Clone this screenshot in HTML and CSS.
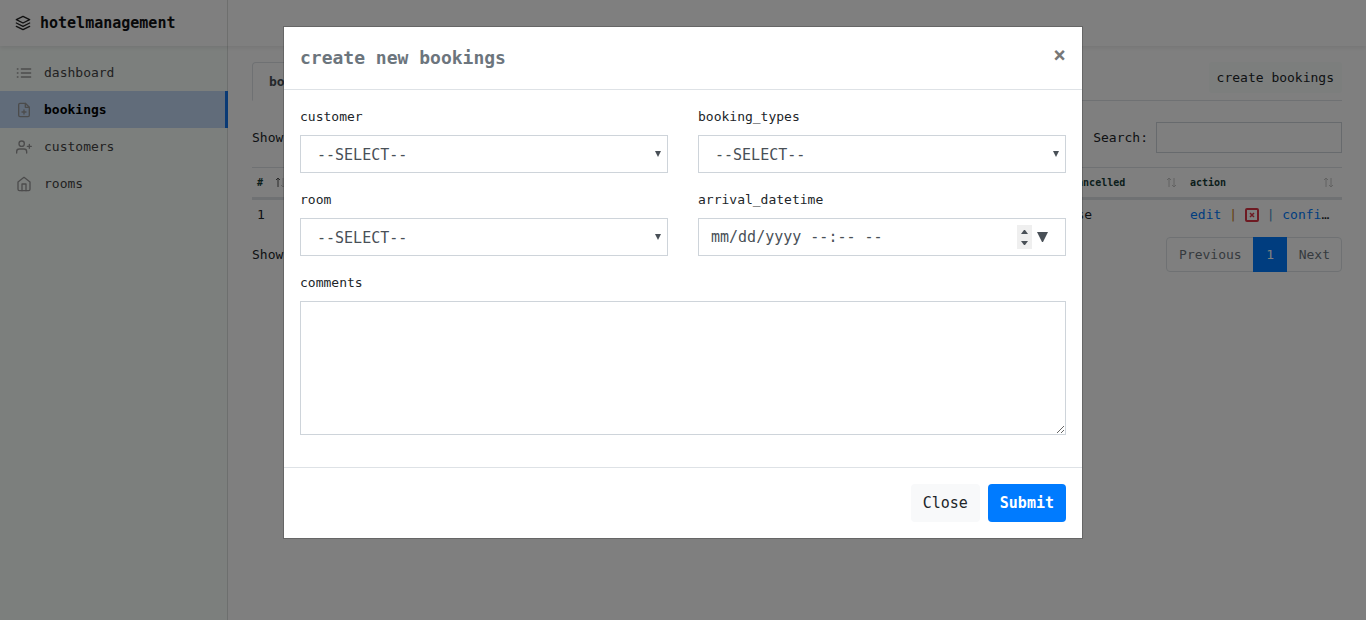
FILE: index.html
```html
<!DOCTYPE html>
<html lang="en">
<head>
<meta charset="utf-8">
<title>hotelmanagement</title>
<link rel="stylesheet" href="styles.css">
</head>
<body>
<div class="app">
  <header class="topbar">
    <a class="brand" href="#">
      <svg class="icon brand-icon" viewBox="0 0 24 24"><path d="M12 2 2 7l10 5 10-5-10-5z"/><path d="m2 17 10 5 10-5"/><path d="m2 12 10 5 10-5"/></svg>
      hotelmanagement
    </a>
  </header>
  <div class="columns">
    <nav class="sidebar">
      <a class="nav-item" href="#">
        <svg class="icon" viewBox="0 0 24 24"><path d="M8 6h14M8 12h14M8 18h14M2 6h1M2 12h1M2 18h1"/></svg>
        dashboard
      </a>
      <a class="nav-item active" href="#">
        <svg class="icon" viewBox="0 0 24 24"><path d="M14 2H6a2 2 0 0 0-2 2v16a2 2 0 0 0 2 2h12a2 2 0 0 0 2-2V8z"/><path d="M14 2v6h6M12 12v6M9 15h6"/></svg>
        bookings
      </a>
      <a class="nav-item" href="#">
        <svg class="icon" viewBox="0 0 24 24"><path d="M16 21v-2a4 4 0 0 0-4-4H5a4 4 0 0 0-4 4v2"/><circle cx="8.500" cy="7" r="4"/><path d="M20 8v6M23 11h-6"/></svg>
        customers
      </a>
      <a class="nav-item" href="#">
        <svg class="icon" viewBox="0 0 24 24"><path d="m3 9 9-7 9 7v11a2 2 0 0 1-2 2H5a2 2 0 0 1-2-2z"/><path d="M9 22V12h6v10"/></svg>
        rooms
      </a>
    </nav>
    <main class="content">
      <div class="tabs">
        <a class="tab" href="#">bookings</a>
        <button class="btn-small" type="button">create bookings</button>
      </div>
      <div class="tools">
        <span>Show</span>
        <label class="search">Search: <input type="search"></label>
      </div>
      <table class="grid">
        <colgroup><col class="col-id"><col><col class="col-cancelled"><col class="col-action"></colgroup>
        <thead>
          <tr>
            <th><div class="head">#<svg class="sort" viewBox="0 0 11 11"><path class="on" d="M3 10V1M1 3l2-2 2 2"/><path d="M8 1v9M6 8l2 2 2-2"/></svg></div></th>
            <th></th>
            <th><div class="head">is_cancelled<svg class="sort" viewBox="0 0 11 11"><path d="M3 10V1M1 3l2-2 2 2M8 1v9M6 8l2 2 2-2"/></svg></div></th>
            <th><div class="head">action<svg class="sort" viewBox="0 0 11 11"><path d="M3 10V1M1 3l2-2 2 2M8 1v9M6 8l2 2 2-2"/></svg></div></th>
          </tr>
        </thead>
        <tbody>
          <tr>
            <td>1</td>
            <td></td>
            <td>false</td>
            <td><a href="#">edit</a> <span class="bar-a">|</span> <a href="#" aria-label="cancel"><svg class="cancel" viewBox="0 0 14 14"><rect x="1" y="1" width="12" height="12" rx="1"/><path class="cross" d="m5 5 4 4M9 5 5 9"/></svg></a> <span class="bar-b">|</span> <a href="#">confi</a>…</td>
          </tr>
        </tbody>
      </table>
      <div class="table-foot">
        <span>Showing</span>
        <div class="pages">
          <button class="page" type="button">Previous</button>
          <button class="page current" type="button">1</button>
          <button class="page" type="button">Next</button>
        </div>
      </div>
    </main>
  </div>
</div>

<div class="backdrop">
  <form class="modal" role="dialog" aria-labelledby="modal-title">
    <div class="modal-head">
      <h1 class="modal-title" id="modal-title">create new bookings</h1>
      <button class="close" type="button" aria-label="Close">×</button>
    </div>
    <div class="modal-body">
      <div class="field">
        <label for="customer">customer</label>
        <div class="select-wrap">
          <select class="control" id="customer"><option>--SELECT--</option></select>
          <svg class="arrow" viewBox="0 0 6 6"><path d="M0 0h6L3 6z"/></svg>
        </div>
      </div>
      <div class="field">
        <label for="types">booking_types</label>
        <div class="select-wrap">
          <select class="control" id="types"><option>--SELECT--</option></select>
          <svg class="arrow" viewBox="0 0 6 6"><path d="M0 0h6L3 6z"/></svg>
        </div>
      </div>
      <div class="field">
        <label for="room">room</label>
        <div class="select-wrap">
          <select class="control" id="room"><option>--SELECT--</option></select>
          <svg class="arrow" viewBox="0 0 6 6"><path d="M0 0h6L3 6z"/></svg>
        </div>
      </div>
      <div class="field">
        <label for="arrival">arrival_datetime</label>
        <div class="control date">
          <input class="date-input" id="arrival" type="text" placeholder="mm/dd/yyyy --:-- --">
          <button class="spin" type="button" aria-label="Change value"><svg viewBox="0 0 15 24"><path d="M4 9h7L8 5H7zM4 16h7l-3 4H7z"/></svg></button>
          <button class="picker" type="button" aria-label="Open calendar"><svg viewBox="0 0 11 10"><path d="M0 0h11L6 10H5z"/></svg></button>
        </div>
      </div>
      <div class="field wide">
        <label for="comments">comments</label>
        <textarea class="control comments" id="comments"></textarea>
      </div>
    </div>
    <div class="modal-foot">
      <button class="btn light" type="button">Close</button>
      <button class="btn primary" type="submit">Submit</button>
    </div>
  </form>
</div>
</body>
</html>
```
FILE: styles.css
```css
* { box-sizing: border-box; }
body {
  margin: 0;
  background: #fff;
  color: #212529;
  font: 13px/21px "DejaVu Sans Mono", monospace;
}
button, input, select, textarea { font: inherit; color: inherit; margin: 0; }
a { color: #007bff; text-decoration: none; }
.icon {
  width: 16px;
  height: 16px;
  flex: none;
  fill: none;
  stroke: #999;
  stroke-width: 2;
  stroke-linecap: round;
  stroke-linejoin: round;
}

.app { display: flex; flex-direction: column; min-height: 100vh; }
.topbar {
  height: 46px;
  display: flex;
  box-shadow: 0 2px 4px rgba(0, 0, 0, .08);
  position: relative;
}
.brand {
  width: 228px;
  padding: 0 15px;
  display: flex;
  align-items: center;
  gap: 9px;
  color: #101214;
  font-size: 15px;
  font-weight: bold;
  border-right: 1px solid #dcdfdd;
}
.brand-icon { stroke: #222; }
.columns { flex: 1; display: flex; }
.sidebar {
  width: 228px;
  flex: none;
  padding-top: 8px;
  background: #f9fefb;
  border-right: 1px solid #dadedc;
}
.nav-item {
  height: 37px;
  padding: 0 16px;
  display: flex;
  align-items: center;
  gap: 12px;
  color: #444;
}
.nav-item.active {
  background: #c2d8f5;
  color: #000;
  font-weight: bold;
  border-right: 3px solid #1474ea;
  margin-right: -1px;
}
.content { flex: 1; min-width: 0; padding: 16px 24px; }

.tabs {
  display: flex;
  justify-content: space-between;
  align-items: flex-start;
  border-bottom: 1px solid #dee2e6;
  margin-bottom: 21px;
}
.tab {
  padding: 8px 16px;
  margin-bottom: -1px;
  border: 1px solid #dee2e6;
  border-bottom-color: #fff;
  border-radius: 4px 4px 0 0;
  background: #fff;
  color: #495057;
  font-weight: bold;
}
.btn-small {
  height: 31px;
  padding: 0 8px;
  border: 0;
  border-radius: 3px;
  background: #f8fcfa;
}
.tools { display: flex; justify-content: space-between; align-items: center; margin-bottom: 14px; }
.search { display: flex; align-items: center; gap: 8px; }
.search input {
  width: 186px;
  height: 31px;
  border: 1px solid #ced4da;
  background: #fff;
  border-radius: 0;
  appearance: none;
}

.grid { width: 100%; table-layout: fixed; border-collapse: collapse; margin-bottom: 8px; }
.col-id { width: 42px; }
.col-cancelled { width: 137px; }
.col-action { width: 157px; }
.grid th {
  padding: 4px 8px 4px 5px;
  border-top: 1px solid #dee2e6;
  border-bottom: 3px solid #dee2e6;
  font-size: 10px;
  text-align: left;
  color: #163c38;
}
.head { display: flex; justify-content: space-between; align-items: center; }
.sort { width: 11px; height: 11px; fill: none; stroke: #c4c4c4; }
.sort .on { stroke: #555; }
.grid td { padding: 4px 5px; white-space: nowrap; }
.bar-a { color: #c87a18; }
.bar-b { color: #4a90c8; }
.cancel { width: 14px; height: 14px; vertical-align: -3px; fill: none; stroke: #dc3545; stroke-width: 2; }
.cross { stroke-width: 1.500; }
.table-foot { display: flex; justify-content: space-between; align-items: center; }
.pages { display: flex; border: 1px solid #dee2e6; border-radius: 4px; }
.page { height: 33px; padding: 0 11px 0 12px; border: 0; background: none; color: #6c757d; }
.page.current { width: 34px; margin: -1px 0; height: 35px; background: #007bff; color: #fff; }

.backdrop {
  position: fixed;
  inset: 0;
  display: flex;
  justify-content: center;
  align-items: flex-start;
  padding-top: 26px;
  background: rgba(0, 0, 0, .5);
}
.modal {
  width: 800px;
  background: #fff;
  background-clip: padding-box;
  border: 1px solid rgba(0, 0, 0, .2);
}
.modal-head {
  display: flex;
  justify-content: space-between;
  align-items: flex-start;
  padding: 16px;
  border-bottom: 1px solid #dee2e6;
}
.modal-title { margin: 0; font-size: 18px; line-height: 30px; color: #6c757d; }
.close { padding: 0; border: 0; background: none; color: #777; font-size: 21px; line-height: 24px; font-weight: bold; }
.modal-body {
  display: grid;
  grid-template-columns: 1fr 1fr;
  gap: 16px 30px;
  padding: 16px 16px 32px;
}
.field { display: flex; flex-direction: column; gap: 8px; }
.wide { grid-column: 1 / -1; }
.control {
  width: 100%;
  height: 38px;
  padding: 0 16px;
  border: 1px solid #ced4da;
  border-radius: 0;
  background: #fff;
  color: #495057;
  font-size: 15px;
  appearance: none;
}
.select-wrap { position: relative; }
.select-wrap .control { padding-top: 2px; }
.arrow { position: absolute; right: 7px; top: 16px; width: 6px; height: 6px; fill: #495057; pointer-events: none; }
.date { display: flex; align-items: center; padding: 0 16px 0 12px; }
.date-input { flex: 1; min-width: 0; padding: 0; border: 0; background: none; }
.date-input::placeholder { color: #495057; opacity: 1; }
.spin { width: 15px; height: 24px; padding: 0; border: 0; background: #efefef; fill: #495057; }
.spin svg { display: block; }
.picker { width: 11px; height: 10px; margin: 0 1px 0 5px; padding: 0; border: 0; background: none; fill: #495057; }
.picker svg { display: block; }
.comments { height: 134px; padding: 6px 12px; resize: vertical; }
.modal-foot {
  display: flex;
  justify-content: flex-end;
  gap: 8px;
  padding: 16px;
  border-top: 1px solid #dee2e6;
}
.btn { height: 38px; padding: 0 12px; border: 0; border-radius: 4px; font-size: 15px; }
.light { background: #f8f9fa; }
.primary { background: #007bff; color: #fff; font-weight: bold; }
```
